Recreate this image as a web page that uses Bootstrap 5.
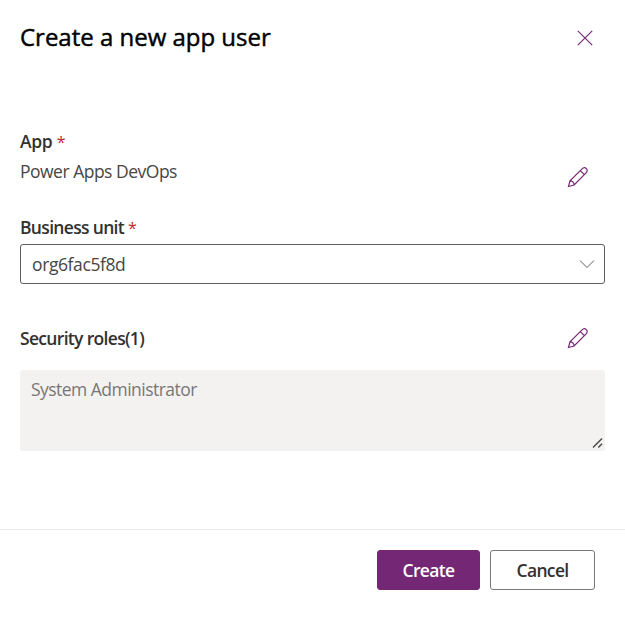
<!DOCTYPE html>
<html lang="en">
<head>
<meta charset="utf-8">
<meta name="viewport" content="width=device-width, initial-scale=1">
<title>Create a new app user</title>
<link href="https://cdn.jsdelivr.net/npm/bootstrap@5.3.0/dist/css/bootstrap.min.css" rel="stylesheet">
<style>
body{font-family:"Segoe UI","Open Sans","Noto Sans",sans-serif;font-size:17.5px;line-height:24px;color:#323130;height:617px;overflow:hidden}
.panel-head{height:128px;padding:20px 30px 0 20px}
.panel-title{font-size:24px;line-height:34px;font-weight:400;color:#000;letter-spacing:-.01px;-webkit-text-stroke:.45px #000}
.panel-main{height:401px;padding:1px 20px 0}
.field-label{font-weight:600;font-size:17.5px;letter-spacing:-.68px}
.label-short{letter-spacing:-.3px}
.req{color:#c4262e;font-weight:400;font-size:16px;line-height:1}
.value-text{letter-spacing:-.5px;color:#484644}
.value-org{letter-spacing:-.4px}
.value-roles{letter-spacing:-.53px}
.icon-btn{width:22px;height:22px;color:#742774}
.app-field{height:86px}
.app-field .icon-btn{margin:37px 16px 0 0}
.app-value{margin-top:6px}
.unit-select{height:40px;border:1px solid #605e5c;border-radius:3px;margin-top:5px;padding:0 8px 0 11px}
.roles-head{height:44px;margin-top:42px}
.roles-head .icon-btn{margin:1px 16px 0 0}
.roles-wrap{height:81px;background:#f3f2f1;border-radius:3px;color:#797775;padding:7px 1px 2px 11px}
.panel-foot{height:88px;border-top:1px solid #eaeaea;padding:20px 30px 0 0;gap:10px}
.panel-foot .btn{height:40px;padding:0;border-radius:3px;font-size:17.5px;font-weight:600;letter-spacing:-.65px;line-height:38px}
.btn-create{width:103px;background:#742774;border-color:#742774;color:#fff}
.panel-foot .btn-cancel{width:105px;background:#fff;border-color:#797775;color:#323130}
</style>
<script src="https://cdn.jsdelivr.net/npm/bootstrap@5.3.0/dist/js/bootstrap.bundle.min.js"></script>
</head>
<body class="bg-white d-flex flex-column">
<svg class="d-none" xmlns="http://www.w3.org/2000/svg">
<symbol id="pencil" viewBox="0 0 22 22"><path d="M1.5 20.5 3 14.9 14.8 3.1C16.2 1.7 17.9 1.2 19.3 2.6C20.7 4 20.3 5.8 18.9 7.2L7.1 19ZM13.3 4.6 17.4 8.7M3 14.9C5.2 14.9 7.1 16.6 7.1 19" fill="none" stroke="currentColor" stroke-width="1.2"/></symbol>
</svg>
<header class="panel-head d-flex justify-content-between align-items-start">
<h1 class="panel-title m-0">Create a new app user</h1>
<button class="btn p-0 border-0 d-flex mt-2" type="button" aria-label="Close"><svg width="20" height="20" viewBox="0 0 20 20"><path d="M2.8 2.8 17.2 17.2M17.2 2.8 2.8 17.2" stroke="#742774" stroke-width="1.15" fill="none"/></svg></button>
</header>
<main class="panel-main">
<section class="app-field d-flex justify-content-between align-items-start">
<div><div class="field-label label-short">App <span class="req">*</span></div><div class="value-text app-value">Power Apps DevOps</div></div>
<svg class="icon-btn" role="img" aria-label="Edit app"><use href="#pencil"/></svg>
</section>
<section>
<div class="field-label">Business unit <span class="req">*</span></div>
<div class="unit-select d-flex justify-content-between align-items-center"><span class="value-text value-org">org6fac5f8d</span><svg width="18" height="12" viewBox="0 0 18 12"><path d="M2 2.5 9 9.5 16 2.5" fill="none" stroke="#605e5c" stroke-width="1"/></svg></div>
</section>
<section>
<div class="roles-head d-flex justify-content-between align-items-start"><span class="field-label">Security roles(1)</span><svg class="icon-btn" role="img" aria-label="Edit roles"><use href="#pencil"/></svg></div>
<div class="roles-wrap d-flex justify-content-between"><span class="value-roles">System Administrator</span><svg class="align-self-end" width="12" height="12" viewBox="0 0 12 12"><path d="M1 10.5 10 1.5M6.3 10.5 10 6.8" stroke="#4a4948" stroke-width="1.5" fill="none"/></svg></div>
</section>
</main>
<footer class="panel-foot d-flex justify-content-end align-items-start">
<button class="btn btn-create" type="button">Create</button><button class="btn btn-cancel" type="button">Cancel</button>
</footer>
</body>
</html>
